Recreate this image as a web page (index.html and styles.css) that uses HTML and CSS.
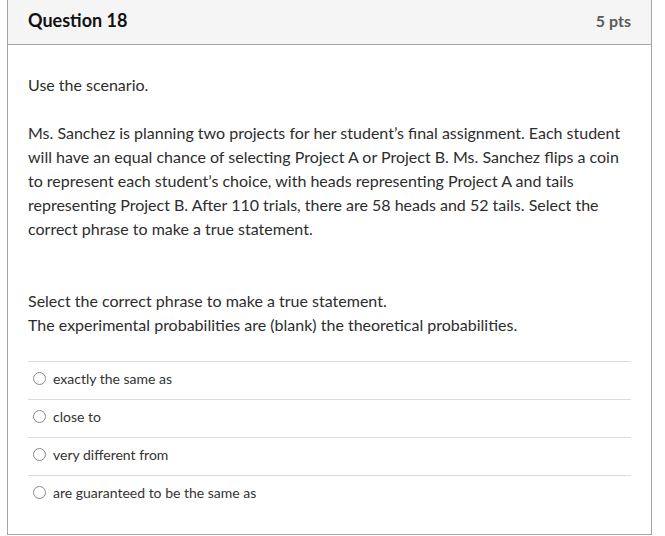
FILE: index.html
```html
<!DOCTYPE html>
<html>
<head>
<meta charset="utf-8">
<link rel="stylesheet" href="styles.css">
</head>
<body>
<div class="question">
  <div class="header">
    <span class="title">Question 18</span>
    <span class="pts">5 pts</span>
  </div>
  <div class="content">
    <p>Use the scenario.</p>
    <p>Ms. Sanchez is planning two projects for her student’s final assignment. Each student will have an equal chance of selecting Project A or Project B. Ms. Sanchez flips a coin to represent each student’s choice, with heads representing Project A and tails representing Project B. After 110 trials, there are 58 heads and 52 tails. Select the correct phrase to make a true statement.</p>
    <p class="gap">Select the correct phrase to make a true statement.<br>The experimental probabilities are (blank) the theoretical probabilities.</p>
    <div class="answers">
      <label class="answer"><span class="radio"></span><span>exactly the same as</span></label>
      <label class="answer"><span class="radio"></span><span>close to</span></label>
      <label class="answer"><span class="radio"></span><span>very different from</span></label>
      <label class="answer"><span class="radio"></span><span>are guaranteed to be the same as</span></label>
    </div>
  </div>
</div>
</body>
</html>
```
FILE: styles.css
```css
html, body {
  margin: 0;
  padding: 0;
  background: #fff;
}
body {
  padding-left: 7px;
  font-family: Lato, "Open Sans", sans-serif;
  color: #2d3b45;
}
.question {
  width: 645px;
  height: 535px;
  box-sizing: border-box;
  border: 1px solid #a5a5a5;
  border-top: none;
}
.header {
  height: 45px;
  box-sizing: border-box;
  background: #f5f5f5;
  border-bottom: 1px solid #a5a5a5;
  display: flex;
  justify-content: space-between;
  align-items: center;
  padding: 0 20px 4px 20px;
}
.title {
  font-weight: 700;
  font-size: 18px;
  color: #111;
}
.pts {
  font-weight: 700;
  font-size: 16px;
  color: #5a5a5a;
}
.content {
  padding: 28px 20px 0 20px;
  font-size: 16px;
  line-height: 24px;
  color: #2d2d2d;
}
.content p {
  margin: 0 0 24px 0;
}
.content p.gap {
  margin-top: 48px;
  margin-bottom: 24px;
}
.answers {
  margin-top: 1px;
}
.answer {
  display: flex;
  align-items: center;
  height: 38px;
  box-sizing: border-box;
  border-top: 1px solid #dcdcdc;
  font-size: 14px;
  color: #333;
  padding-left: 5px;
  padding-bottom: 4px;
}
.radio {
  width: 13px;
  height: 13px;
  box-sizing: border-box;
  border: 1px solid #8a8a8a;
  border-radius: 50%;
  background: #fff;
  margin-right: 7px;
  flex: none;
}
```
